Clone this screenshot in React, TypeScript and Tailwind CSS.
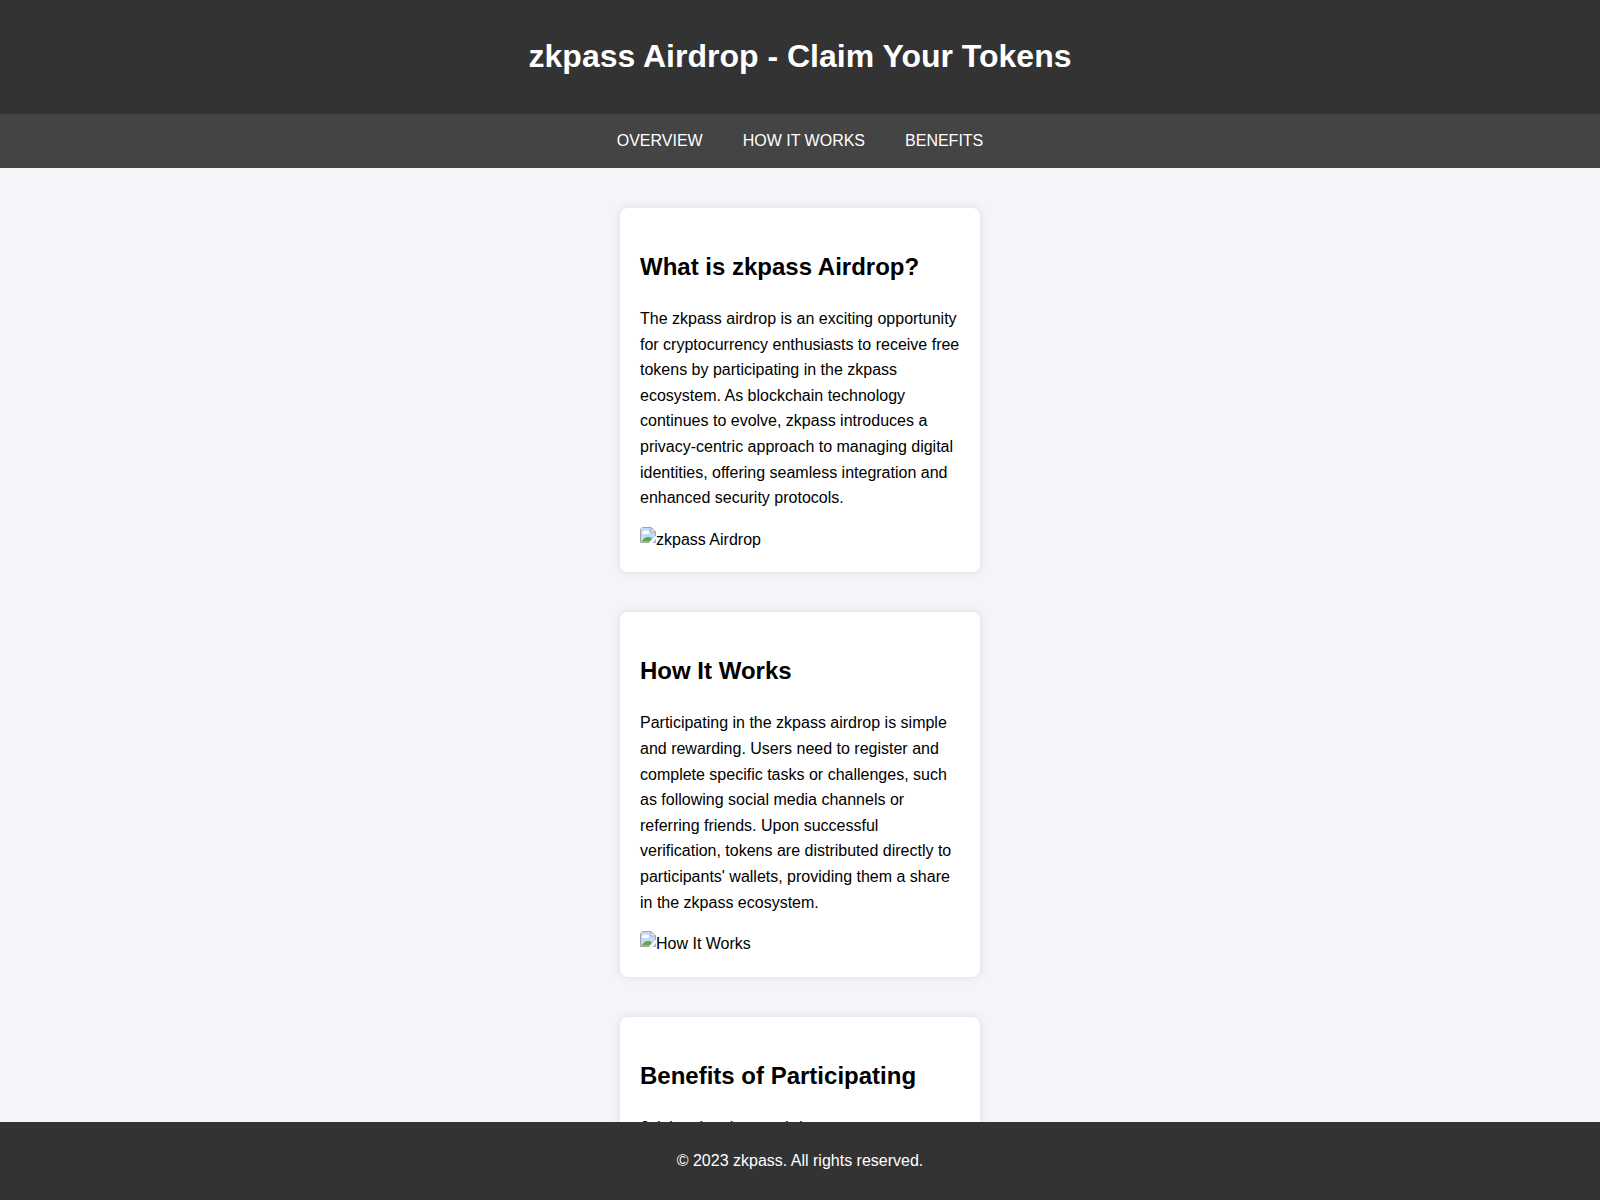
interface Section {
  id: string;
  title: string;
  body: string;
  alt: string;
}

const sections: Section[] = [
  {
    id: "overview",
    title: "What is zkpass Airdrop?",
    body: "The zkpass airdrop is an exciting opportunity for cryptocurrency enthusiasts to receive free tokens by participating in the zkpass ecosystem. As blockchain technology continues to evolve, zkpass introduces a privacy-centric approach to managing digital identities, offering seamless integration and enhanced security protocols.",
    alt: "zkpass Airdrop",
  },
  {
    id: "how-it-works",
    title: "How It Works",
    body: "Participating in the zkpass airdrop is simple and rewarding. Users need to register and complete specific tasks or challenges, such as following social media channels or referring friends. Upon successful verification, tokens are distributed directly to participants' wallets, providing them a share in the zkpass ecosystem.",
    alt: "How It Works",
  },
  {
    id: "benefits",
    title: "Benefits of Participating",
    body: "Joining the zkpass airdrop grants users access to free tokens.",
    alt: "Benefits",
  },
];

const links = [
  { href: "#overview", label: "Overview" },
  { href: "#how-it-works", label: "How It Works" },
  { href: "#benefits", label: "Benefits" },
];

function MissingImage({ alt }: { alt: string }) {
  return (
    <div className="flex items-start overflow-hidden rounded-[4px]">
      <svg className="h-4 w-4 shrink-0" viewBox="0 0 16 16" aria-hidden="true">
        <path d="M0.5 0.5H11L15.5 5V15.5H0.5Z" fill="#fff" stroke="#a3a3a3" />
        <path d="M1 1H11V5H15V15H1Z" fill="#c3d9f7" />
        <path d="M3 7a1.300 1.300 0 0 1 .3-2.500A2 2 0 0 1 6.800 4a1.600 1.600 0 0 1 1.200 3Z" fill="#fff" />
        <path d="M1.500 14.500C3 12 5.500 10 8 10C9.500 10 11 10.500 12 11.500L9.500 14.500Z" fill="#5aab3f" />
        <path d="M16 8.500V12L12.500 16H9Z" fill="#fff" />
        <path d="M11 0.500V5H15.500Z" fill="#fff" stroke="#a3a3a3" />
      </svg>
      <span>{alt}</span>
    </div>
  );
}

export default function App() {
  return (
    <div className="min-h-screen bg-[#f4f4f9] font-['Liberation_Sans',Arial,sans-serif] text-base leading-[1.6] text-black">
      <header className="bg-[#333] pt-8 pb-[34px] text-center text-white">
        <h1 className="text-[32px] leading-[48px] font-bold">zkpass Airdrop - Claim Your Tokens</h1>
      </header>

      <nav className="flex justify-center gap-10 bg-[#444] py-3.5 leading-[26px] text-white">
        {links.map((link) => (
          <a key={link.href} href={link.href} className="uppercase">
            {link.label}
          </a>
        ))}
      </nav>

      <main className="flex flex-col items-center gap-10 px-5 py-10">
        {sections.map((section) => (
          <section
            key={section.id}
            id={section.id}
            className="w-full max-w-[360px] rounded-lg bg-white p-5 shadow-[0_0_10px_rgba(0,0,0,0.1)]"
          >
            <h2 className="my-5 text-[24px] leading-[38px] font-bold">{section.title}</h2>
            <p className="mb-4">{section.body}</p>
            <MissingImage alt={section.alt} />
          </section>
        ))}
      </main>

      {/* Stays over the page content */}
      <footer className="fixed inset-x-0 bottom-0 bg-[#333] py-[26px] text-center leading-[26px] text-white">
        <p>© 2023 zkpass. All rights reserved.</p>
      </footer>
    </div>
  );
}
